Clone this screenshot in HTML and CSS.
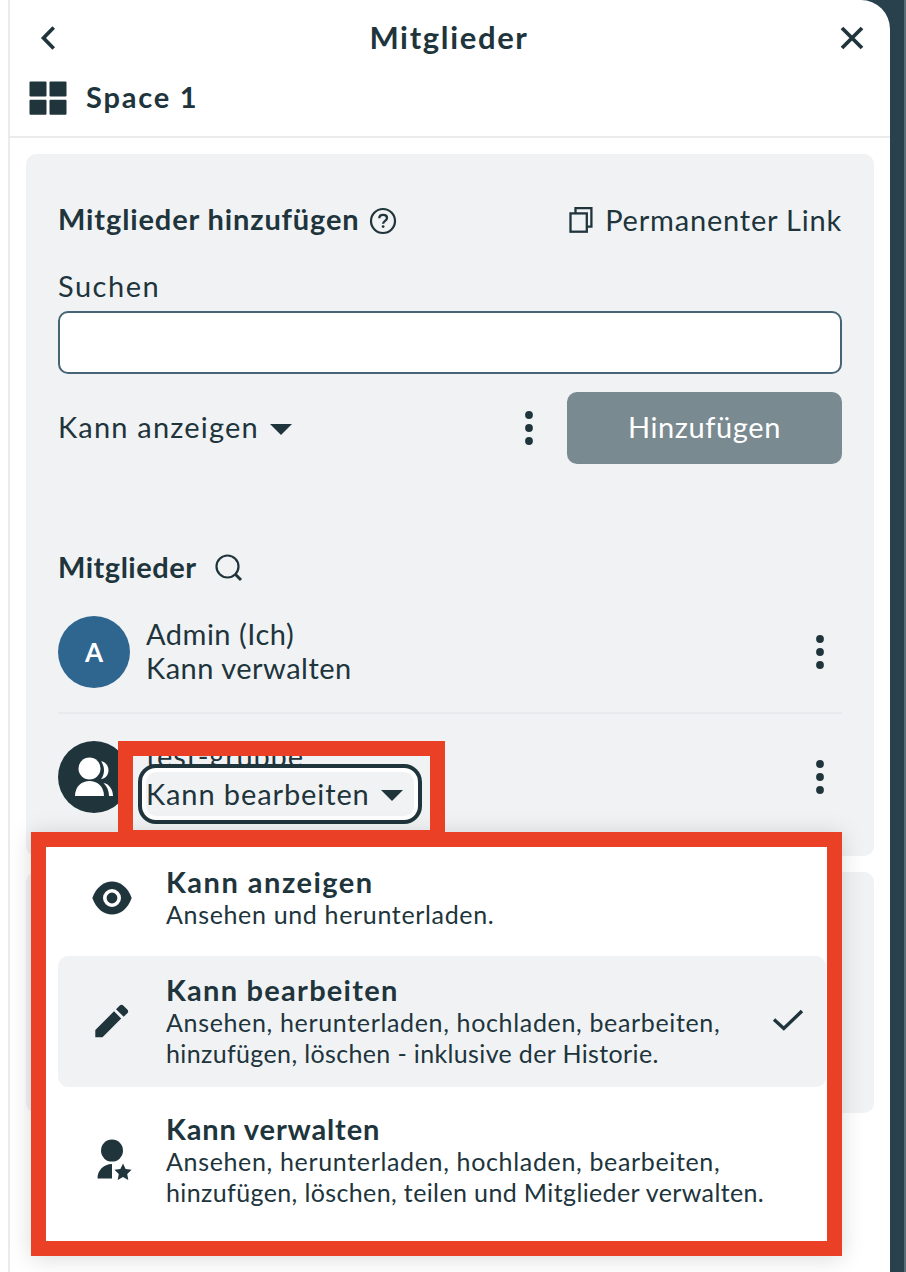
FILE: index.html
```html
<!DOCTYPE html>
<html lang="de">
<head>
<meta charset="utf-8">
<title>Mitglieder</title>
<link rel="stylesheet" href="styles.css">
</head>
<body>
<div class="page">
  <aside class="panel">
    <header class="panel-header">
      <div class="title-row">
        <svg class="back" viewBox="0 0 24 28"><path d="M17.700 3.500 7.500 14l10.200 10.500" fill="none" stroke="currentColor" stroke-width="3.700"/></svg>
        <h1 class="title">Mitglieder</h1>
        <svg class="close" viewBox="0 0 28 28"><path d="M4 4l20 20M24 4 4 24" fill="none" stroke="currentColor" stroke-width="3.800"/></svg>
      </div>
      <div class="space-row">
        <svg class="grid-icon" viewBox="0 0 38 34" fill="currentColor"><rect x="0.500" y="0.500" width="17" height="15" rx="1"/><rect x="20.500" y="0.500" width="17" height="15" rx="1"/><rect x="0.500" y="18.700" width="17" height="15" rx="1"/><rect x="20.500" y="18.700" width="17" height="15" rx="1"/></svg>
        <h2 class="space-name">Space 1</h2>
      </div>
    </header>

    <section class="card members">
      <div class="invite-head">
        <h3 class="invite-title">Mitglieder hinzufügen</h3>
        <svg class="help" viewBox="0 0 26 26" fill="none" stroke="currentColor"><circle cx="13" cy="13" r="12" stroke-width="2.200"/><path d="M9.300 10.200C9.300 5.800 17 6 17 10c0 2.800-3.900 2.900-3.900 5.800" stroke-width="2.300"/><circle cx="13.100" cy="18.600" r="1.400" fill="currentColor" stroke="none"/></svg>
        <span class="permalink">
          <svg class="copy" viewBox="0 0 24 26" fill="none" stroke="currentColor" stroke-width="2.300"><rect x="1.500" y="6.400" width="16.300" height="18.300"/><path d="M6.500 6V1.200h15.900v18.500H18"/></svg>
          <span class="permalink-text">Permanenter Link</span>
        </span>
      </div>
      <label class="search-label" for="q">Suchen</label>
      <input class="search-input" id="q" type="text">
      <div class="invite-actions">
        <span class="role-view">Kann anzeigen</span>
        <svg class="caret" viewBox="0 0 22 11"><path d="M0 0h22L11 11z" fill="currentColor"/></svg>
        <svg class="dots invite-dots" viewBox="0 0 8 34" fill="currentColor"><circle cx="4" cy="4" r="3.900"/><circle cx="4" cy="17" r="3.900"/><circle cx="4" cy="30" r="3.900"/></svg>
        <button class="add-button">Hinzufügen</button>
      </div>
      <div class="members-head">
        <h3 class="members-title">Mitglieder</h3>
        <svg class="search-icon" viewBox="0 0 27 27" fill="none" stroke="currentColor"><circle cx="12.500" cy="12.500" r="11" stroke-width="2.200"/><path d="m20 20 6 6" stroke-width="3"/></svg>
      </div>
      <div class="member first">
        <div class="avatar user">A</div>
        <div class="member-text"><span class="name-admin">Admin (Ich)</span><span class="role-manage">Kann verwalten</span></div>
        <svg class="dots" viewBox="0 0 8 34" fill="currentColor"><circle cx="4" cy="4" r="3.900"/><circle cx="4" cy="17" r="3.900"/><circle cx="4" cy="30" r="3.900"/></svg>
      </div>
      <div class="member second">
        <div class="avatar group">
          <svg class="group-icon" viewBox="0 0 40 40" fill="#fff"><path d="M26 4.300c10 1.200 10 16.700 0 17.800 4-5 4-12.800 0-17.800zM28.500 26c6 1 9.500 7 9.500 13h-4c0-5-2-9.800-5.500-13z"/><circle cx="14.500" cy="11.500" r="11"/><path d="M0 39c0-20 29-20 29 0z"/></svg>
        </div>
        <div class="member-text"><span class="name-group">test-gruppe</span></div>
        <svg class="dots" viewBox="0 0 8 34" fill="currentColor"><circle cx="4" cy="4" r="3.900"/><circle cx="4" cy="17" r="3.900"/><circle cx="4" cy="30" r="3.900"/></svg>
      </div>
    </section>
    <section class="card extra"></section>
  </aside>

  <div class="role-select"><div class="role-inner">
    <span class="role-edit">Kann bearbeiten</span>
    <svg class="caret" viewBox="0 0 22 11"><path d="M0 0h22L11 11z" fill="currentColor"/></svg>
  </div></div>
  <div class="role-menu">
    <div class="option">
      <svg class="option-icon" viewBox="0 0 44 44"><path d="M2.300 22C10 0 34 0 41.700 22 34 44 10 44 2.300 22z" fill="currentColor"/><circle cx="22" cy="22" r="7.200" fill="none" stroke="#fff" stroke-width="3.600"/></svg>
      <div class="option-body"><div class="option-title t1">Kann anzeigen</div><div class="option-desc"><span class="d1">Ansehen und herunterladen.</span></div></div>
    </div>
    <div class="option selected">
      <svg class="option-icon" viewBox="0 0 44 44" fill="currentColor"><path d="M5.300 31 24 12.300l7.200 7.200L12.500 38.200H5.300zM26 10.300l3.500-3.500q2-2 4 0l3.800 3.800q1.800 1.800 0 3.600l-3.600 3.600z"/></svg>
      <div class="option-body"><div class="option-title t2">Kann bearbeiten</div><div class="option-desc"><span class="d2">Ansehen, herunterladen, hochladen, bearbeiten,</span><br><span class="d3">hinzufügen, löschen - inklusive der Historie.</span></div></div>
      <svg class="check" viewBox="0 0 32 24"><path d="m2 10.500 9.800 9L30 2" fill="none" stroke="currentColor" stroke-width="3.400"/></svg>
    </div>
    <div class="option">
      <svg class="option-icon" viewBox="0 0 44 44" fill="currentColor"><circle cx="22" cy="12.600" r="11"/><path d="M7.500 40.500c0-8 6-14.500 14.500-14.500v14.500zM33 25.600l2.600 5.400 6 .8-4.400 4.200 1.100 5.900-5.300-2.900-5.300 2.900 1.100-5.900-4.400-4.200 6-.8z"/></svg>
      <div class="option-body"><div class="option-title t3">Kann verwalten</div><div class="option-desc"><span class="d2">Ansehen, herunterladen, hochladen, bearbeiten,</span><br><span class="d4">hinzufügen, löschen, teilen und Mitglieder verwalten.</span></div></div>
    </div>
  </div>
  <div class="select-highlight"></div>
</div>
</body>
</html>
```
FILE: styles.css
```css
* { box-sizing: border-box; }
body { margin: 0; background: #fff; }
.page {
  position: relative;
  width: 906px;
  height: 1272px;
  overflow: hidden;
  padding-left: 8px;
  background: linear-gradient(90deg, #fff 500px, #29404d 500px, #29404d 904px, #5c6c76 904px);
  color: #20343c;
  font: 29px/34px Lato, "Open Sans", sans-serif;
  white-space: nowrap;
}
svg { display: block; flex: none; overflow: visible; }
h1, h2, h3 { margin: 0; font-size: 29px; font-weight: 700; }
.panel {
  width: 882px;
  height: 1272px;
  background: #fff;
  border-left: 2px solid #ebebeb;
  border-top-right-radius: 29px;
}
.panel-header { height: 138px; border-bottom: 2px solid #ebebeb; }
.title-row { height: 76px; padding: 0 24px 0 26px; display: flex; align-items: center; justify-content: space-between; }
.back { width: 24px; height: 28px; }
.close { width: 28px; height: 28px; }
.title { margin-top: -2px; font-size: 31px; letter-spacing: 1.650px; }
.space-row { height: 44px; padding-left: 19px; display: flex; align-items: center; gap: 19px; }
.space-name { margin-top: -2px; letter-spacing: 1.800px; }
.grid-icon { width: 38px; height: 34px; }
.card { margin: 16px 16px 0; padding: 0 32px; border-radius: 10px; background: #f1f2f4; }
.members { height: 702px; padding-top: 48px; }
.extra { height: 241px; }
.invite-head { height: 36px; display: flex; align-items: center; }
.invite-title { margin-top: -2px; letter-spacing: .87px; }
.help { width: 26px; height: 26px; margin: 2px 0 0 10px; }
.permalink { display: flex; align-items: center; gap: 12px; margin-left: auto; }
.permalink-text { letter-spacing: .8px; }
.copy { width: 24px; height: 26px; }
.search-label { display: block; margin-top: 31px; height: 34px; letter-spacing: 1.500px; }
.search-input {
  display: block;
  width: 784px;
  height: 63px;
  margin-top: 8px;
  border: 2px solid #456475;
  border-radius: 10px;
  background: #fff;
}
.invite-actions { height: 72px; margin-top: 18px; display: flex; align-items: center; }
.role-view { margin-top: -2px; letter-spacing: 1.200px; }
.caret { width: 22px; height: 11px; margin: 2px 0 0 11px; }
.dots { width: 8px; height: 34px; margin: 0 18px 0 auto; }
.invite-dots { margin-right: 34px; }
.add-button {
  width: 275px;
  height: 72px;
  padding: 0 0 2px;
  border: 0;
  border-radius: 10px;
  background: #798a90;
  color: #fff;
  font: inherit;
  letter-spacing: .6px;
}
.members-head { height: 36px; margin-top: 85px; display: flex; align-items: center; gap: 18px; }
.members-title { letter-spacing: .5px; }
.search-icon { width: 27px; height: 27px; }
.member { height: 72px; display: flex; align-items: center; }
.first { height: 98px; margin-top: 31px; padding-bottom: 24px; border-bottom: 2px solid #e9eaed; }
.second { margin-top: 27px; }
.avatar { width: 72px; height: 72px; border-radius: 50%; display: flex; align-items: center; justify-content: center; }
.user { background: #2f668f; color: #fff; font-weight: 700; font-size: 26px; }
.group { background: #20343c; padding-left: 2px; }
.group-icon { width: 40px; height: 40px; }
.member-text { height: 70px; margin-left: 16px; display: flex; flex-direction: column; letter-spacing: .5px; }
.second .member-text { height: 76px; letter-spacing: .8px; }

.role-select {
  position: absolute;
  left: 138px;
  top: 764px;
  width: 284px;
  height: 60px;
  padding: 4px;
  border: 4px solid #20343c;
  border-radius: 18px;
  background: #fff;
}
.role-inner { height: 44px; border-radius: 10px; background: #f1f2f4; display: flex; align-items: center; }
.role-edit { margin-top: -1px; letter-spacing: .9px; }
.role-menu {
  position: absolute;
  left: 31px;
  top: 832px;
  width: 811px;
  height: 424px;
  border: 15px solid #ea4025;
  background: #fff;
  padding: 1px 1px 0 12px;
  display: flex;
  flex-direction: column;
  gap: 8px;
  box-shadow: 0 2px 22px rgba(0, 0, 0, .15);
}
.option { display: flex; align-items: center; padding: 17px 0 18px 32px; border-radius: 10px; }
.selected { background: #f1f2f4; }
.option-icon { width: 44px; height: 44px; margin-right: 32px; }
.option-title { font-weight: 700; height: 34px; }
.option-desc { font-size: 25px; line-height: 31px; }
.t1 { letter-spacing: 1.500px; }
.t2 { letter-spacing: 1.260px; }
.t3 { letter-spacing: .85px; }
.d1, .d2 { letter-spacing: .66px; }
.d3 { letter-spacing: .36px; }
.d4 { letter-spacing: .38px; }
.check { width: 32px; height: 24px; margin: 0 22px 0 auto; }
.select-highlight {
  position: absolute;
  left: 118px;
  top: 741px;
  width: 327px;
  height: 104px;
  border: 15px solid #ea4025;
}
```
